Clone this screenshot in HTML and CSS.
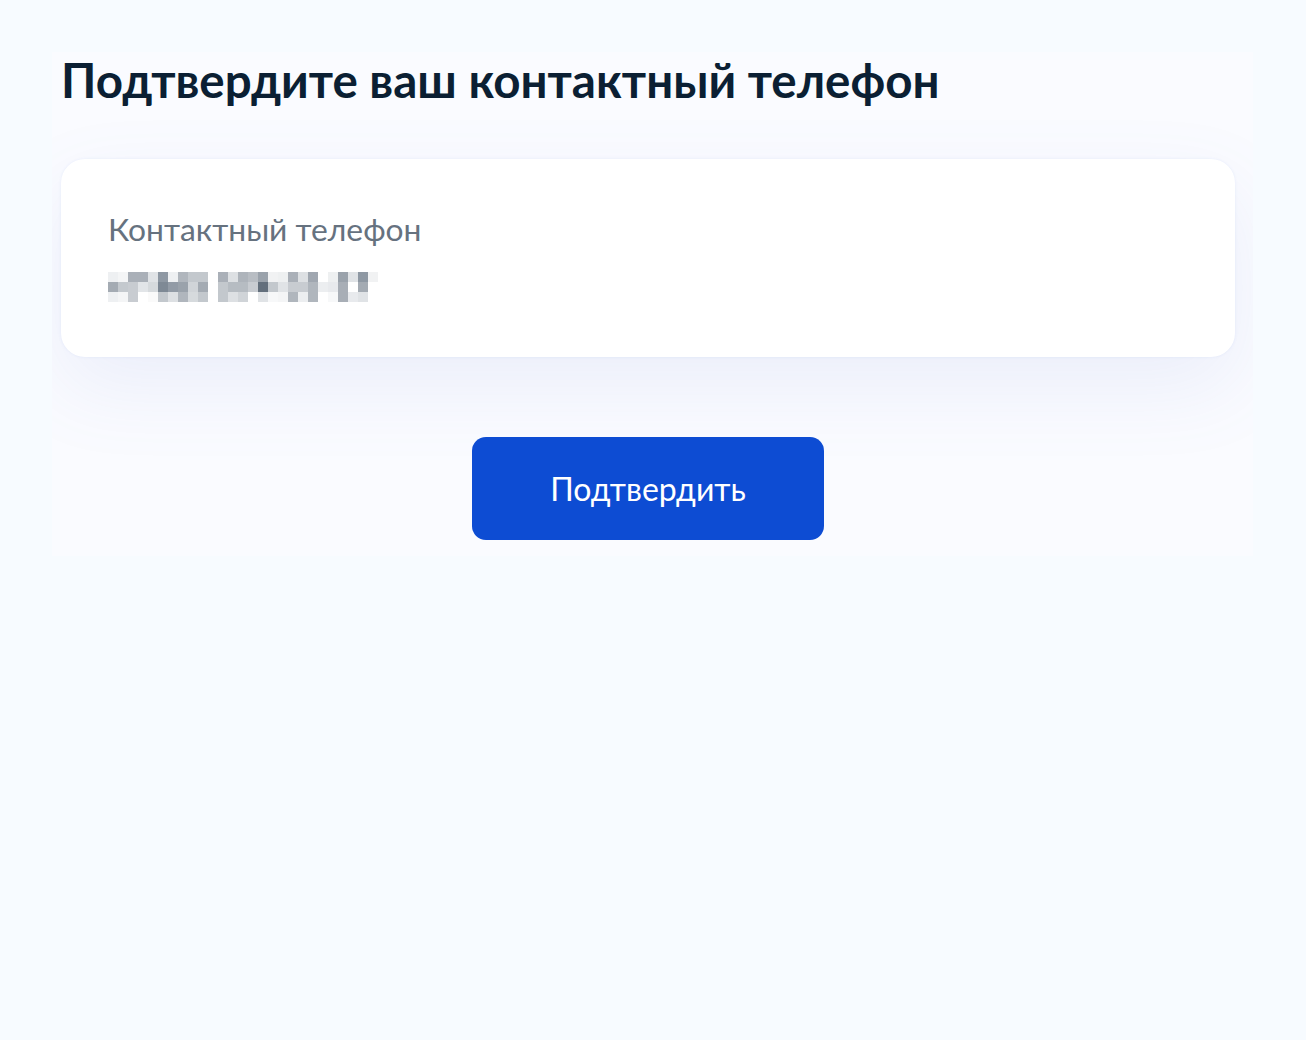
FILE: index.html
```html
<!DOCTYPE html>
<html lang="ru">
<head>
<meta charset="utf-8">
<title>Подтвердите ваш контактный телефон</title>
<link rel="stylesheet" href="styles.css">
</head>
<body>
<main class="page">
  <section class="panel">
    <h1 class="title">Подтвердите ваш контактный телефон</h1>
    <div class="card">
      <div class="label">Контактный телефон</div>
      <svg class="phone" width="270" height="30" viewBox="0 0 27 3" shape-rendering="crispEdges" aria-label="+7 (***) ***-**-**">
        <g>
          <rect x="0" y="0" width="1" height="1" fill="#eef0f2"/><rect x="1" y="0" width="1" height="1" fill="#f4f5f6"/><rect x="2" y="0" width="1" height="1" fill="#aab0b8"/><rect x="3" y="0" width="1" height="1" fill="#aab0b8"/><rect x="4" y="0" width="1" height="1" fill="#e0e3e6"/><rect x="5" y="0" width="1" height="1" fill="#8e98a3"/><rect x="6" y="0" width="1" height="1" fill="#eef0f2"/><rect x="7" y="0" width="1" height="1" fill="#b0b6bd"/><rect x="8" y="0" width="1" height="1" fill="#c3c8cd"/><rect x="9" y="0" width="1" height="1" fill="#c3c8cd"/>
          <rect x="11" y="0" width="1" height="1" fill="#aab0b8"/><rect x="12" y="0" width="1" height="1" fill="#dde0e3"/><rect x="13" y="0" width="1" height="1" fill="#aeb4bb"/><rect x="14" y="0" width="1" height="1" fill="#b8bdc3"/><rect x="15" y="0" width="1" height="1" fill="#9aa2ab"/><rect x="16" y="0" width="1" height="1" fill="#f1f2f3"/><rect x="17" y="0" width="1" height="1" fill="#eef0f1"/><rect x="18" y="0" width="1" height="1" fill="#aab0b8"/><rect x="19" y="0" width="1" height="1" fill="#dde0e3"/><rect x="20" y="0" width="1" height="1" fill="#a0a7b0"/><rect x="22" y="0" width="1" height="1" fill="#eef0f1"/><rect x="23" y="0" width="1" height="1" fill="#9aa2ab"/><rect x="24" y="0" width="1" height="1" fill="#e0e3e6"/><rect x="25" y="0" width="1" height="1" fill="#8e98a3"/><rect x="26" y="0" width="1" height="1" fill="#f1f2f3"/>
        </g>
        <g>
          <rect x="0" y="1" width="1" height="1" fill="#a4abb3"/><rect x="1" y="1" width="1" height="1" fill="#c4c9ce"/><rect x="2" y="1" width="1" height="1" fill="#c8ccd1"/><rect x="3" y="1" width="1" height="1" fill="#e2e5e8"/><rect x="4" y="1" width="1" height="1" fill="#d6dadd"/><rect x="5" y="1" width="1" height="1" fill="#7e8995"/><rect x="6" y="1" width="1" height="1" fill="#929ba6"/><rect x="7" y="1" width="1" height="1" fill="#9aa2ab"/><rect x="8" y="1" width="1" height="1" fill="#d0d4d8"/><rect x="9" y="1" width="1" height="1" fill="#a4abb3"/>
          <rect x="11" y="1" width="1" height="1" fill="#c3c8cd"/><rect x="12" y="1" width="1" height="1" fill="#b6bcc2"/><rect x="13" y="1" width="1" height="1" fill="#b6bcc2"/><rect x="14" y="1" width="1" height="1" fill="#c8ccd1"/><rect x="15" y="1" width="1" height="1" fill="#636f7c"/><rect x="16" y="1" width="1" height="1" fill="#c3c8cd"/><rect x="17" y="1" width="1" height="1" fill="#e0e3e6"/><rect x="18" y="1" width="1" height="1" fill="#c8ccd1"/><rect x="19" y="1" width="1" height="1" fill="#c8ccd1"/><rect x="20" y="1" width="1" height="1" fill="#b0b6bd"/><rect x="21" y="1" width="1" height="1" fill="#eceef0"/><rect x="22" y="1" width="1" height="1" fill="#e8eaed"/><rect x="23" y="1" width="1" height="1" fill="#a8aeb6"/><rect x="25" y="1" width="1" height="1" fill="#a4abb3"/>
        </g>
        <g>
          <rect x="0" y="2" width="1" height="1" fill="#eef0f2"/><rect x="1" y="2" width="1" height="1" fill="#f4f5f6"/><rect x="2" y="2" width="1" height="1" fill="#c8ccd1"/><rect x="4" y="2" width="1" height="1" fill="#fafafa"/><rect x="5" y="2" width="1" height="1" fill="#c3c8cd"/><rect x="6" y="2" width="1" height="1" fill="#dde0e3"/><rect x="7" y="2" width="1" height="1" fill="#b0b6bd"/><rect x="8" y="2" width="1" height="1" fill="#d6dadd"/><rect x="9" y="2" width="1" height="1" fill="#c3c8cd"/>
          <rect x="11" y="2" width="1" height="1" fill="#c3c8cd"/><rect x="12" y="2" width="1" height="1" fill="#dde0e3"/><rect x="13" y="2" width="1" height="1" fill="#d0d4d8"/><rect x="15" y="2" width="1" height="1" fill="#e0e3e6"/><rect x="16" y="2" width="1" height="1" fill="#f7f8f9"/><rect x="17" y="2" width="1" height="1" fill="#f4f5f6"/><rect x="18" y="2" width="1" height="1" fill="#b0b6bd"/><rect x="19" y="2" width="1" height="1" fill="#eceef0"/><rect x="20" y="2" width="1" height="1" fill="#b0b6bd"/><rect x="22" y="2" width="1" height="1" fill="#f7f8f9"/><rect x="23" y="2" width="1" height="1" fill="#a8aeb6"/><rect x="24" y="2" width="1" height="1" fill="#e8eaed"/><rect x="25" y="2" width="1" height="1" fill="#e0e3e6"/>
        </g>
      </svg>
    </div>
    <div class="actions">
      <button class="btn" type="button">Подтвердить</button>
    </div>
  </section>
</main>
</body>
</html>
```
FILE: styles.css
```css
* { box-sizing: border-box; }
html, body {
  margin: 0;
  padding: 0;
  background: #f7fbff;
  font-family: Lato, "Noto Sans", sans-serif;
}
.page {
  padding: 52px 53px 0 52px;
}
.panel {
  background: #fafbff;
  overflow: hidden;
  padding: 0 18px 16px 9px;
}
.title {
  margin: 0;
  font-size: 47.5px;
  line-height: 56px;
  font-weight: 700;
  color: #0b1f33;
}
.card {
  margin-top: 51px;
  background: #ffffff;
  border-radius: 24px;
  padding: 48px 47px 55px;
  box-shadow: 0 0 3px rgba(110, 140, 220, 0.12), 0 30px 80px rgba(110, 130, 210, 0.1);
}
.label {
  font-size: 31.8px;
  line-height: 44px;
  color: #66727f;
}
.phone {
  display: block;
  margin-top: 21px;
  width: 270px;
  height: 30px;
}
.actions {
  display: flex;
  justify-content: center;
  margin-top: 80px;
}
.btn {
  width: 352px;
  height: 103px;
  border: 0;
  border-radius: 14px;
  background: #0d4cd3;
  color: #ffffff;
  font-family: Lato, "Noto Sans", sans-serif;
  font-size: 32px;
  line-height: 103px;
  padding: 0;
}
```
